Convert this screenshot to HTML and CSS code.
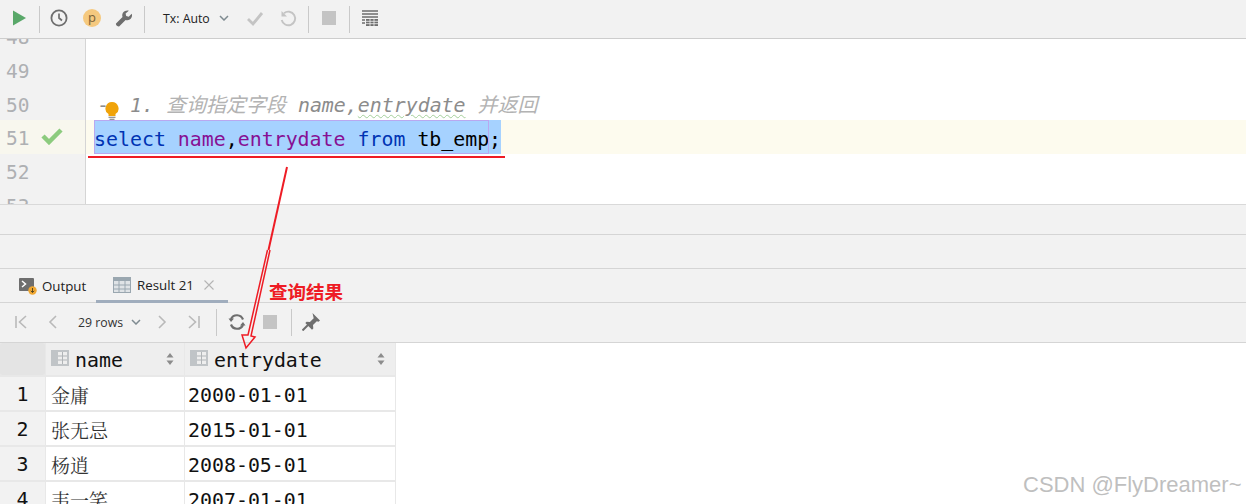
FILE: index.html
```html
<!DOCTYPE html>
<html lang="zh">
<head>
<meta charset="utf-8">
<title>Query result</title>
<link rel="stylesheet" href="styles.css">
</head>
<body>
<div class="app">
  <header class="toolbar">
    <svg class="ico play" viewBox="0 0 14 16"><path d="M1 .5l13 7.500-13 7.500z" fill="#59a869"/></svg>
    <span class="sep sep-a"></span>
    <svg class="ico" viewBox="0 0 18 18"><circle cx="9" cy="9" r="7.600" fill="none" stroke="#6e6e6e" stroke-width="1.800"/><path d="M9 4.500V9l3 2.500" fill="none" stroke="#6e6e6e" stroke-width="1.700"/></svg>
    <span class="badge">p</span>
    <svg class="ico" viewBox="0 0 18 18"><path d="M1 14.500l6.500-6.500c-.8-2.500.2-4.800 2.500-5.900 1.200-.6 2.600-.7 3.800-.3L10.600 4.600l.6 2.500 2.500.6 3-3c.5 1.300.4 2.600-.2 3.800-1.100 2.200-3.500 3.200-5.900 2.400l-6.500 6.500c-.9.700-3.700-1.500-3.100-2.900z" fill="#6e6e6e"/></svg>
    <span class="sep sep-b"></span>
    <span class="tx">Tx: Auto</span>
    <svg class="chev" viewBox="0 0 10 6"><path d="M1 1l4 4 4-4" fill="none" stroke="#7f8b91" stroke-width="1.500"/></svg>
    <svg class="ico check" viewBox="0 0 18 18"><path d="M2 10l5 5L16 4" fill="none" stroke="#c4c4c4" stroke-width="2.800"/></svg>
    <svg class="ico undo" viewBox="0 0 18 18"><path d="M5 4.200A6.800 6.800 0 1 1 2.700 11" fill="none" stroke="#c4c4c4" stroke-width="1.900"/><path d="M2.500 2v5.500H8z" fill="#c4c4c4"/></svg>
    <span class="sep sep-c"></span>
    <span class="stop"></span>
    <span class="sep sep-d"></span>
    <svg class="ico" viewBox="0 0 18 18"><path d="M1 2h16M1 5h16M1 8h16" stroke="#6e6e6e" stroke-width="1.300"/><path d="M1 11h3M1 14h3" stroke="#6e6e6e" stroke-width="1.300"/><path d="M5 10h12v7H5z" fill="#6e6e6e"/><path d="M5 12.300h12M5 14.700h12M9 10v7M13 10v7" stroke="#f2f2f2" stroke-width=".8"/></svg>
  </header>

  <section class="editor">
    <div class="line clipped-top"><span class="num">48</span></div>
    <div class="line"><span class="num">49</span></div>
    <div class="line"><span class="num">50</span>
      <span class="code comment"><span class="dash">-</span><span class="bulb"><svg viewBox="0 0 14 20"><path d="M7 1a6.500 6.500 0 0 0-3.500 12V15h7v-2A6.500 6.500 0 0 0 7 1z" fill="#f0a30a"/><path d="M3.500 16.300h7M4.500 18.300h5" stroke="#777" stroke-width="1.100"/></svg></span>1. <span class="cjk">查询指定字段</span> name,<span class="wavy">entrydate</span> <span class="cjk">并返回</span></span>
    </div>
    <div class="line current"><span class="num">51</span>
      <svg class="ok" viewBox="0 0 22 18"><path d="M2 9l6 6L20 3" fill="none" stroke="#8ccb7e" stroke-width="4.500"/></svg>
      <span class="code sel"><span class="sel-box"><span class="kw">select</span> <span class="col">name</span>,<span class="col">entrydate</span> <span class="kw">from</span> tb_emp</span>;</span>
    </div>
    <div class="line"><span class="num">52</span></div>
    <div class="line"><span class="num">53</span></div>
  </section>

  <div class="band"></div>
  <div class="band band-b"></div>

  <nav class="tabs">
    <div class="tab">
      <svg class="tab-ico" viewBox="0 0 18 18"><rect x="0" y="1" width="15" height="13" rx="1" fill="#6e6e6e"/><path d="M3 4l3.500 3L3 10" fill="none" stroke="#fff" stroke-width="1.500"/><circle cx="13.500" cy="13.500" r="4.200" fill="#f0a732"/><path d="M13.500 11v4.500M11.800 13.800l1.700 1.700 1.700-1.700" fill="none" stroke="#5a4a20" stroke-width="1"/></svg>
      <span>Output</span>
    </div>
    <div class="tab tab-active">
      <svg class="tab-ico grid-ico" viewBox="0 0 18 16"><rect x=".5" y=".5" width="17" height="15" fill="#dfe3e6" stroke="#9aa7b0"/><rect x=".5" y=".5" width="17" height="3.500" fill="#9aa7b0"/><path d="M.5 8h17M.5 12h17M6 4v12M12 4v12" stroke="#9aa7b0"/></svg>
      <span>Result 21</span>
      <svg class="close" viewBox="0 0 10 10"><path d="M.5.500l9 9M9.500.500l-9 9" stroke="#b4b4b4" stroke-width="1.100"/></svg>
    </div>
  </nav>

  <div class="pager">
    <svg class="pg" viewBox="0 0 14 14"><path d="M2 1v12" stroke="#b9b9b9" stroke-width="1.600"/><path d="M12 1L5.500 7l6.500 6" fill="none" stroke="#b9b9b9" stroke-width="1.600"/></svg>
    <svg class="pg pg-prev" viewBox="0 0 10 14"><path d="M8 1L2 7l6 6" fill="none" stroke="#b9b9b9" stroke-width="1.600"/></svg>
    <span class="rows">29 rows</span>
    <svg class="chev chev-sm" viewBox="0 0 10 6"><path d="M1 1l4 4 4-4" fill="none" stroke="#7f8b91" stroke-width="1.500"/></svg>
    <svg class="pg pg-next" viewBox="0 0 10 14"><path d="M2 1l6 6-6 6" fill="none" stroke="#b9b9b9" stroke-width="1.600"/></svg>
    <svg class="pg pg-last" viewBox="0 0 14 14"><path d="M12 1v12" stroke="#b9b9b9" stroke-width="1.600"/><path d="M2 1l6.500 6L2 13" fill="none" stroke="#b9b9b9" stroke-width="1.600"/></svg>
    <span class="sep sep-e"></span>
    <svg class="ico reload" viewBox="0 0 18 18"><path d="M15 6.500A6.500 6.500 0 0 0 3 6M3 11.500A6.500 6.500 0 0 0 15 12" fill="none" stroke="#6e6e6e" stroke-width="2.200"/><path d="M.5 5.500h5.500L3 9zM17.500 12.500H12L15 9z" fill="#6e6e6e"/></svg>
    <span class="stop stop-sm"></span>
    <span class="sep sep-f"></span>
    <svg class="ico pin" viewBox="0 0 18 18"><path d="M10.500 0L18 7.500l-1.500 1.200-1.700-.4-3.800 3.800.3 3.300-1.300 1.300L3.300 10l1.300-1.300 3.300.3 3.800-3.800-.4-1.700z" fill="#6e6e6e"/><path d="M6.500 11.500L.5 17.500" stroke="#6e6e6e" stroke-width="2"/></svg>
  </div>

  <div class="grid">
    <div class="corner"></div>
    <div class="head"><svg class="col-ico" viewBox="0 0 18 16"><path d="M0 0h18v16H0z" fill="#c0c4c7"/><path d="M7 2h9v12H7z" fill="#eee"/><path d="M7 6h9M7 10h9M11.500 2v12" stroke="#b0b4b7"/></svg><span class="head-label">name</span><svg class="sort" viewBox="0 0 8 12"><path d="M4 0l3.500 4.500h-7zM4 12L.5 7.500h7z" fill="#8c8c8c"/></svg></div>
    <div class="head"><svg class="col-ico" viewBox="0 0 18 16"><path d="M0 0h18v16H0z" fill="#c0c4c7"/><path d="M7 2h9v12H7z" fill="#eee"/><path d="M7 6h9M7 10h9M11.500 2v12" stroke="#b0b4b7"/></svg><span class="head-label">entrydate</span><svg class="sort" viewBox="0 0 8 12"><path d="M4 0l3.500 4.500h-7zM4 12L.5 7.500h7z" fill="#8c8c8c"/></svg></div>

    <div class="rownum">1</div><div class="cell cn">金庸</div><div class="cell">2000-01-01</div>
    <div class="rownum">2</div><div class="cell cn">张无忌</div><div class="cell">2015-01-01</div>
    <div class="rownum">3</div><div class="cell cn">杨逍</div><div class="cell">2008-05-01</div>
    <div class="rownum">4</div><div class="cell cn">韦一笑</div><div class="cell">2007-01-01</div>
  </div>

  <svg class="marks" viewBox="0 0 1246 504">
    <path d="M88 157H505" stroke="#ee1c25" stroke-width="2" fill="none"/>
    <path d="M287 167L268.500 250" stroke="#ee1c25" stroke-width="2" fill="none"/>
    <path d="M267.500 250L248 335 242 335 246 348 255 337 251 336 270 250" stroke="#ee1c25" stroke-width="1.500" fill="none"/>
  </svg>
  <span class="note">查询结果</span>
  <span class="mark">CSDN @FlyDreamer~</span>
</div>
</body>
</html>
```
FILE: styles.css
```css
* { box-sizing: border-box; }
html, body { margin: 0; padding: 0; }
body { background: #fff; overflow: hidden; }
.app {
  position: relative;
  width: 1246px;
  height: 504px;
  overflow: hidden;
  display: flex;
  flex-direction: column;
  font-family: "Open Sans", "Noto Sans", sans-serif;
}
.toolbar {
  flex: none;
  height: 39px;
  display: flex;
  align-items: center;
  padding: 0 0 2px 12px;
  background: #f2f2f2;
  border-bottom: 1px solid #cdcdcd;
}
.toolbar .sep { margin-top: 3px; }
.ico { width: 18px; height: 18px; flex: none; }
.play { width: 14px; height: 16px; }
.sep { width: 1px; height: 27px; background: #c9c9c9; flex: none; }
.sep-a { margin-left: 13px; margin-right: 10px; }
.badge {
  width: 18px; height: 18px; border-radius: 50%;
  margin: 0 14px 0 15px;
  background: #f5c97f; color: #7a6238;
  font-size: 13px; line-height: 16px; text-align: center; flex: none;
}
.sep-b { margin-left: 11px; margin-right: 18px; }
.tx { font-size: 12.300px; color: #222; width: 49px; white-space: nowrap; flex: none; }
.chev { width: 10px; height: 6px; margin-left: 7px; flex: none; }
.check { margin-left: 17px; }
.undo { margin-left: 15px; }
.sep-c { margin-left: 11px; margin-right: 13px; }
.stop { width: 14px; height: 14px; background: #c4c4c4; flex: none; }
.sep-d { margin-left: 13px; margin-right: 11px; }

.editor {
  flex: none;
  height: 165px;
  overflow: hidden;
  background: linear-gradient(to right, #f2f2f2 85px, #d5d5d5 85px, #d5d5d5 86px, #fff 86px);
  font-family: "DejaVu Sans Mono", "Noto Sans CJK SC", monospace;
  font-size: 19.900px;
}
.line {
  position: relative;
  height: 33.700px;
  padding-top: 4px;
  display: flex;
  align-items: center;
  white-space: pre;
}
.clipped-top { margin-top: -20px; }
.num { width: 94px; padding-left: 6px; color: #aeb0b3; font-size: 19.500px; flex: none; }
.code { color: #000; }
.comment {
  display: block;
  color: #8c8c8c;
  font-style: italic;
  line-height: 24px;
  margin-top: 4px;
}
.cjk { color: #b3b3b3; font-size: 20px; }
.dash { display: inline-block; width: 11px; padding-left: 3px; font-style: normal; }
.bulb { display: inline-block; width: 14px; height: 20px; margin-right: 11px; vertical-align: -9px; }
.bulb svg { display: block; width: 14px; height: 20px; }
.wavy { text-decoration: underline wavy #a3cf9a 1px; text-underline-offset: 2px; }
.current { background: linear-gradient(to right, #f8f7ee 85px, #d5d5d5 85px, #d5d5d5 86px, #fdfbee 86px); }
.ok { position: absolute; left: 41px; top: 7px; width: 22px; height: 18px; }
.sel {
  align-self: flex-start;
  margin-top: -4px;
  background: #a6d2ff;
  height: 34px;
  line-height: 39px;
  width: 407px;
}
.sel-box { display: inline-block; height: 34px; width: 395px; outline: 1px solid #b9a8f0; outline-offset: -1px; }
.kw { color: #0033b3; }
.col { color: #871094; }

.band { flex: none; height: 30px; background: #f2f2f2; border-top: 1px solid #d9d9d9; }
.band-b { height: 34px; border-top: 1px solid #d5d5d5; }

.tabs {
  flex: none;
  height: 35px;
  display: flex;
  align-items: stretch;
  background: #f2f2f2;
  border-top: 1px solid #d5d5d5;
  border-bottom: 1px solid #d5d5d5;
  font-size: 13.300px;
  color: #222;
}
.tab { display: flex; align-items: center; height: 33px; padding-left: 19px; width: 96px; flex: none; }
.tab-ico { width: 18px; height: 18px; margin-right: 5px; flex: none; }
.tab-active { width: 132px; height: 34px; padding-left: 17px; border-bottom: 3px solid #a0adbd; }
.grid-ico { height: 16px; margin-right: 6px; }
.close { width: 10px; height: 10px; margin-left: 10px; }

.pager {
  flex: none;
  height: 40px;
  display: flex;
  align-items: center;
  padding: 0 0 1px 14px;
  background: #f2f2f2;
  border-bottom: 1px solid #d5d5d5;
}
.pg { width: 14px; height: 14px; flex: none; }
.pg-prev { width: 10px; margin-left: 20px; }
.rows { font-size: 12.300px; color: #333; margin-left: 20px; width: 47px; white-space: nowrap; flex: none; }
.chev-sm { margin-left: 6px; }
.pg-next { width: 10px; margin-left: 16px; }
.pg-last { margin-left: 20px; }
.sep-e { margin-left: 15px; margin-right: 11px; }
.stop-sm { margin-left: 17px; }
.sep-f { margin-left: 14px; margin-right: 10px; }

.grid {
  flex: 1;
  display: grid;
  grid-template-columns: 45px 138px 210px;
  grid-template-rows: 32px;
  grid-auto-rows: 33px;
  gap: 2px 1px;
  align-content: start;
  padding-right: 1px;
  background: #e8e8e8;
  font-family: "DejaVu Sans Mono", "Noto Sans CJK SC", monospace;
  font-size: 19.900px;
  color: #111;
  width: 396px;
}
.corner { background: #e4e4e4; border-radius: 3px; }
.head {
  display: flex;
  align-items: center;
  background: #eeeeee;
  padding-left: 5px;
  padding-right: 10px;
}
.head-label { padding-top: 2px; }
.col-ico { width: 18px; height: 16px; margin-right: 6px; margin-top: -3px; flex: none; }
.sort { width: 8px; height: 12px; margin-left: auto; }
.rownum {
  background: #f2f2f2;
  text-align: center;
  line-height: 35px;
}
.cell {
  background: #fff;
  line-height: 38px;
  padding-left: 3px;
}
.cn { font-family: "Noto Serif CJK SC", "Noto Sans CJK SC", serif; font-size: 19px; line-height: 35px; padding-left: 5px; color: #333; }

.marks { position: absolute; left: 0; top: 0; width: 1246px; height: 504px; pointer-events: none; }
.note {
  position: absolute; left: 269px; top: 279px;
  font-family: "Noto Sans CJK SC", sans-serif;
  font-size: 18.500px; line-height: 24px; font-weight: 700; color: #ee1c25;
}
.mark {
  position: absolute; left: 1023px; top: 471px;
  font-family: "Liberation Sans", sans-serif;
  font-size: 22px; line-height: 28px; color: #bfbfbf;
}
```
